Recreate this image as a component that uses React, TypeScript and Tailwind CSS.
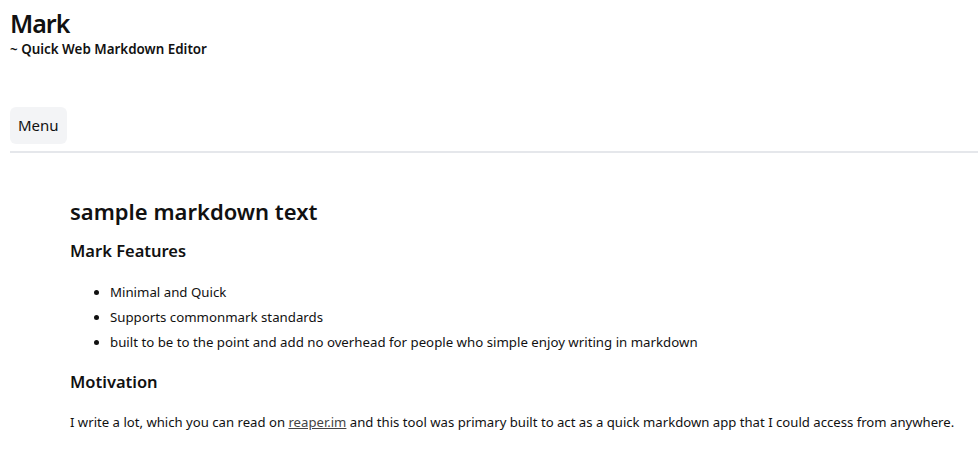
export default function App() {
  return (
    <div className="min-h-[470px] bg-white text-[#111] font-['Noto_Sans',sans-serif]">
      <header className="px-[10px] pt-[8px]">
        <h1 className="text-[25px] leading-[30px] font-semibold tracking-[-1px]">Mark</h1>
        <p className="text-[13.4px] leading-[18px] font-semibold mt-[2px]">~ Quick Web Markdown Editor</p>
      </header>

      <nav className="mt-[49px] ml-[10px] border-b-2 border-[#e5e7eb] pb-[7px]">
        <button className="bg-[#f3f4f6] rounded-md h-[37px] px-[8px] text-[15px] text-[#111]">Menu</button>
      </nav>

      <main className="pl-[70px] pr-[10px] pt-[44px]">
        <h2 className="text-[22px] leading-[28px] font-semibold">sample markdown text</h2>
        <h3 className="text-[16.5px] leading-[22px] font-semibold mt-[15px]">Mark Features</h3>
        <ul className="list-disc pl-[40px] mt-[18px] text-[13.25px] leading-[25px]">
          <li>Minimal and Quick</li>
          <li>Supports commonmark standards</li>
          <li>built to be to the point and add no overhead for people who simple enjoy writing in markdown</li>
        </ul>
        <h3 className="text-[16.5px] leading-[22px] font-semibold mt-[16px]">Motivation</h3>
        <p className="text-[13.15px] leading-[20px] mt-[19px]">
          I write a lot, which you can read on{" "}
          <a href="#" className="underline text-[#444]">reaper.im</a> and this tool was primary built to act as a quick
          markdown app that I could access from anywhere.
        </p>
      </main>
    </div>
  );
}
